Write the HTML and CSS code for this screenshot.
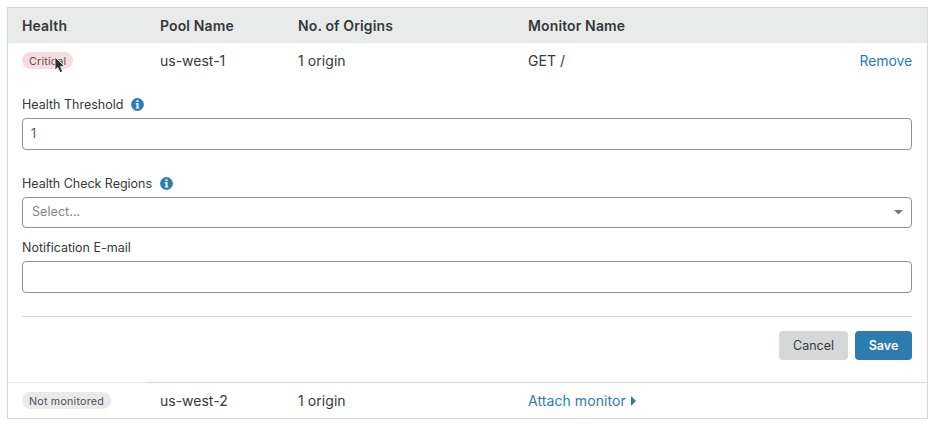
FILE: index.html
```html
<!DOCTYPE html>
<html lang="en">
<head>
<meta charset="utf-8">
<title>Origin pools</title>
<link rel="stylesheet" href="styles.css">
</head>
<body>
<main class="pools">
  <div class="row head">
    <span class="c-health">Health</span><span class="c-pool">Pool Name</span><span class="c-orig">No. of Origins</span><span class="c-mon">Monitor Name</span>
  </div>
  <div class="row">
    <span class="c-health"><span class="badge critical">Critical
      <svg class="cursor" width="12" height="18" viewBox="0 0 12 18"><path d="M1 1V14L3.8 11.6L6 16.6L8.6 15.5L6.5 10.6H10.6Z" fill="#2e3133" stroke="#fff" stroke-width=".8"/></svg></span></span>
    <span class="c-pool">us-west-1</span><span class="c-orig">1 origin</span><span class="c-mon">GET /</span><a class="link remove">Remove</a>
  </div>
  <form class="details">
    <div class="label first"><span>Health Threshold</span>
      <svg class="info" width="13" height="13" viewBox="0 0 13 13"><circle cx="6.5" cy="6.5" r="6.4" fill="#2c7cb0"/><path d="M5.5 2.3h2v1.7h-2zM4.8 5h2.7v4.4h.8v1.2H4.8V9.4h.8V6.2h-.8z" fill="#fff"/></svg></div>
    <div class="field">1</div>
    <div class="label second"><span>Health Check Regions</span>
      <svg class="info" width="13" height="13" viewBox="0 0 13 13"><circle cx="6.5" cy="6.5" r="6.4" fill="#2c7cb0"/><path d="M5.5 2.3h2v1.7h-2zM4.8 5h2.7v4.4h.8v1.2H4.8V9.4h.8V6.2h-.8z" fill="#fff"/></svg></div>
    <div class="field select"><span>Select...</span><svg width="9" height="5" viewBox="0 0 9 5"><path d="M0 0H9L4.5 4.5Z" fill="#777"/></svg></div>
    <div class="label third"><span>Notification E-mail</span></div>
    <div class="field"></div>
    <div class="actions"><span class="btn cancel">Cancel</span><span class="btn save">Save</span></div>
  </form>
  <div class="rule"></div>
  <div class="row last">
    <span class="c-health"><span class="badge">Not monitored</span></span><span class="c-pool">us-west-2</span><span class="c-orig">1 origin</span><span class="c-mon"><a class="link">Attach monitor<svg class="caret" width="5" height="10" viewBox="0 0 5 10"><path d="M0 0L5 5L0 10Z" fill="#2c7cb0"/></svg></a></span>
  </div>
</main>
</body>
</html>
```
FILE: styles.css
```css
* { box-sizing: border-box; }
body { margin: 0; padding: 7px 5px 8px 7px; background: #fff; color: #36393a; font: 14px/20px Inter, "Liberation Sans", sans-serif; letter-spacing: .07px; }
.pools { width: 921px; height: 412px; border: 1px solid #d5d7d8; }
.row { display: flex; align-items: center; height: 35px; padding: 1px 15px 0 14px; }
.head { background: #e9ebeb; font-weight: 600; letter-spacing: .13px; }
.c-health, .c-pool { width: 138px; }
.c-pool { letter-spacing: 0; }
.head .c-pool { letter-spacing: .13px; }
.c-orig { width: 230px; }
.c-mon { flex: 1; }
.link { color: #2c7cb0; }
.remove { letter-spacing: -.1px; }
.caret { margin-left: 5px; }
.badge { display: block; position: relative; top: -.5px; width: max-content; height: 17px; padding: 0 7px; border-radius: 9px; background: #e9ebeb; color: #4d5152; font-size: 10.7px; line-height: 19px; letter-spacing: .22px; }
.critical { background: #f9dce1; }
.cursor { position: absolute; left: 31.5px; top: 4px; }
.details { height: 304px; padding: 16px 15px 0 14px; font-size: 13px; }
.label { display: flex; align-items: center; gap: 8px; height: 20px; padding-top: 1px; font-size: 12.5px; letter-spacing: 0; }
.first { margin-bottom: 4px; }
.second { margin-top: 23px; margin-bottom: 4px; letter-spacing: -.03px; }
.third { margin-top: 9px; margin-bottom: 4px; }
.info { display: block; margin-top: -1px; }
.field { height: 32px; border: 1px solid #8d9396; border-radius: 4px; padding: 0 8px; line-height: 30px; color: #555; font-size: 12.5px; }
.select { display: flex; align-items: center; justify-content: space-between; height: 31px; padding: 0 8px 0 9px; color: #808385; line-height: 27px; }
.select span { height: 29px; }
.actions { display: flex; justify-content: flex-end; gap: 7px; margin-top: 23px; padding-top: 14px; border-top: 1px solid #d5d7d8; }
.btn { height: 29px; border-radius: 4px; text-align: center; line-height: 29px; font-size: 12.5px; letter-spacing: 0; }
.cancel { width: 69px; background: #d5d7d8; }
.save { width: 57px; background: #2c7cb0; color: #fff; font-weight: 600; }
.rule { height: 1px; background: linear-gradient(to right, #e9ebeb 138px, #d5d7d8 138px); }
```
